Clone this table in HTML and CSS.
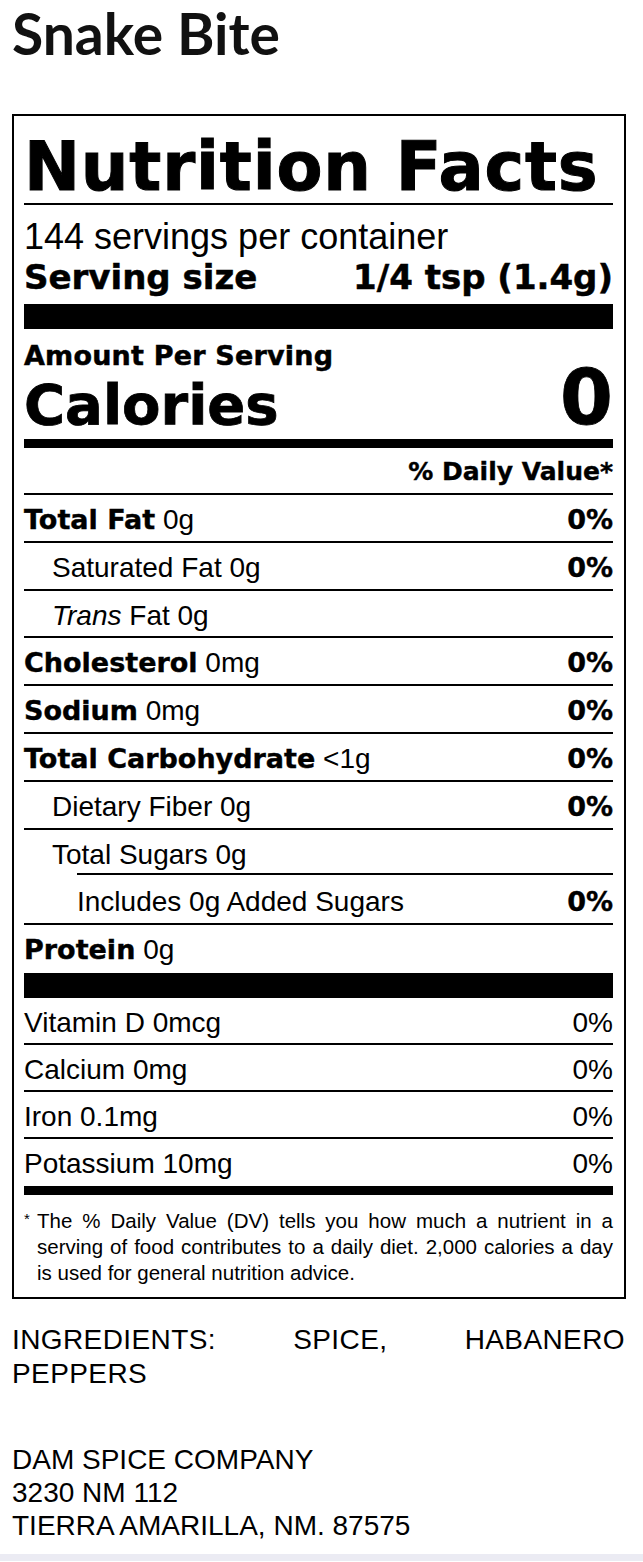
FILE: index.html
```html
<!DOCTYPE html>
<html lang="en">
<head>
<meta charset="utf-8">
<title>Snake Bite</title>
<link rel="stylesheet" href="styles.css">
</head>
<body>
<main class="page">
  <h1 class="product-name">Snake Bite</h1>

  <section class="facts">
    <h2 class="facts-title">Nutrition Facts</h2>

    <div class="servings">
      <p class="servings-count">144 servings per container</p>
      <p class="serving-size"><span>Serving size</span><span>1/4 tsp (1.4g)</span></p>
    </div>

    <div class="bar bar-thick"></div>

    <div class="calories-block">
      <p class="amount">Amount Per Serving</p>
      <p class="calories"><span class="calories-label">Calories</span><span class="calories-value">0</span></p>
    </div>

    <div class="bar bar-medium"></div>

    <p class="dv-head">% Daily Value*</p>

    <ul class="nutrients">
      <li class="row"><span class="name"><b>Total Fat</b> 0g</span><b class="pct">0%</b></li>
      <li class="row indent"><span class="name">Saturated Fat 0g</span><b class="pct">0%</b></li>
      <li class="row indent"><span class="name"><i>Trans</i> Fat 0g</span></li>
      <li class="row"><span class="name"><b>Cholesterol</b> 0mg</span><b class="pct">0%</b></li>
      <li class="row"><span class="name"><b>Sodium</b> 0mg</span><b class="pct">0%</b></li>
      <li class="row"><span class="name"><b>Total Carbohydrate</b> &lt;1g</span><b class="pct">0%</b></li>
      <li class="row indent"><span class="name">Dietary Fiber 0g</span><b class="pct">0%</b></li>
      <li class="row indent row-sugars"><span class="name">Total Sugars 0g</span></li>
      <li class="row indent-2"><span class="name">Includes 0g Added Sugars</span><b class="pct">0%</b></li>
      <li class="row row-last"><span class="name"><b>Protein</b> 0g</span></li>
    </ul>

    <div class="bar bar-thick"></div>

    <ul class="vitamins">
      <li class="row vit"><span class="name">Vitamin D 0mcg</span><span class="pct">0%</span></li>
      <li class="row vit"><span class="name">Calcium 0mg</span><span class="pct">0%</span></li>
      <li class="row vit"><span class="name">Iron 0.1mg</span><span class="pct">0%</span></li>
      <li class="row vit row-last"><span class="name">Potassium 10mg</span><span class="pct">0%</span></li>
    </ul>

    <div class="bar bar-medium"></div>

    <div class="footnote">
      <span class="star">*</span>
      <p class="footnote-text">The % Daily Value (DV) tells you how much a nutrient in a serving of food contributes to a daily diet. 2,000 calories a day is used for general nutrition advice.</p>
    </div>
  </section>

  <p class="ingredients">INGREDIENTS: SPICE, HABANERO PEPPERS</p>

  <address class="maker">DAM SPICE COMPANY<br>3230 NM 112<br>TIERRA AMARILLA, NM. 87575</address>
</main>
<div class="bottom-strip"></div>
</body>
</html>
```

FILE: styles.css
```css
html, body {
  margin: 0;
  padding: 0;
  background: #ffffff;
  color: #000000;
  font-family: "Liberation Sans", Arial, sans-serif;
}

.page {
  padding-left: 12px;
  width: 614px;
}

.product-name {
  margin: 0;
  padding-top: 1px;
  font-family: Lato, "Open Sans", sans-serif;
  font-weight: 700;
  font-size: 57px;
  line-height: 64px;
  color: #111111;
}

.facts {
  margin-top: 49px;
  border: 2px solid #000;
  padding: 15px 11px 11px 10px;
}

.facts-title {
  margin: 0;
  font-family: "DejaVu Sans", sans-serif;
  font-weight: 700;
  font-size: 67px;
  line-height: 72px;
  letter-spacing: 0.8px;
  -webkit-text-stroke: 1px #000;
  border-bottom: 2px solid #000;
}

.servings {
  padding: 12px 0 7px;
}

.servings-count {
  margin: 0;
  font-size: 36px;
  line-height: 40px;
}

.serving-size {
  margin: 0;
  display: flex;
  justify-content: space-between;
  font-family: "DejaVu Sans", sans-serif;
  font-weight: 700;
  font-size: 34px;
  line-height: 40px;
  -webkit-text-stroke: 0.5px #000;
}

.bar {
  background: #000;
}

.bar-thick {
  height: 25px;
}

.bar-medium {
  height: 9px;
}

.calories-block {
  padding: 11px 0 8px;
}

.amount {
  margin: 0;
  font-family: "DejaVu Sans", sans-serif;
  font-weight: 700;
  font-size: 27px;
  line-height: 32px;
  letter-spacing: 0.2px;
  -webkit-text-stroke: 0.5px #000;
}

.calories {
  margin: 0;
  display: flex;
  justify-content: space-between;
  align-items: baseline;
  font-family: "DejaVu Sans", sans-serif;
  font-weight: 700;
  -webkit-text-stroke: 0.8px #000;
}

.calories-label {
  font-size: 56px;
  line-height: 52px;
}

.calories-value {
  font-size: 76px;
  line-height: 52px;
}

.dv-head {
  margin: 0;
  padding: 9px 0 6px;
  text-align: right;
  font-family: "DejaVu Sans", sans-serif;
  font-weight: 700;
  font-size: 25px;
  line-height: 30px;
  -webkit-text-stroke: 0.4px #000;
  border-bottom: 2px solid #000;
}

.nutrients,
.vitamins {
  list-style: none;
  margin: 0;
  padding: 0;
}

.row {
  display: flex;
  justify-content: space-between;
  align-items: baseline;
  box-sizing: border-box;
  height: 47.8px;
  padding-top: 9px;
  border-bottom: 2px solid #000;
  font-size: 28px;
  line-height: 32px;
}

.row b {
  font-family: "DejaVu Sans", sans-serif;
  font-weight: 700;
  font-size: 27px;
  -webkit-text-stroke: 0.4px #000;
}

.row i {
  font-style: italic;
}

.indent {
  padding-left: 28px;
}

.indent-2 {
  padding-left: 53px;
}

.row-sugars {
  border-bottom-color: transparent;
  background: linear-gradient(#000, #000) right bottom / calc(100% - 53px) 2px no-repeat;
}

.row-last {
  border-bottom: 0;
}

.vit {
  height: 47px;
}

.footnote {
  display: flex;
  padding-top: 13px;
}

.star {
  flex: 0 0 13px;
  font-size: 15px;
  line-height: 22px;
}

.footnote-text {
  margin: 0;
  flex: 1;
  font-size: 20.5px;
  line-height: 26px;
  text-align: justify;
}

.ingredients {
  margin: 24px 1px 0 0;
  font-size: 28px;
  line-height: 34px;
  letter-spacing: 0.4px;
  text-align: justify;
}

.maker {
  margin-top: 52px;
  font-style: normal;
  font-size: 28px;
  line-height: 33px;
}

.bottom-strip {
  margin-top: 12px;
  height: 7px;
  background: #ebebf3;
}
```
